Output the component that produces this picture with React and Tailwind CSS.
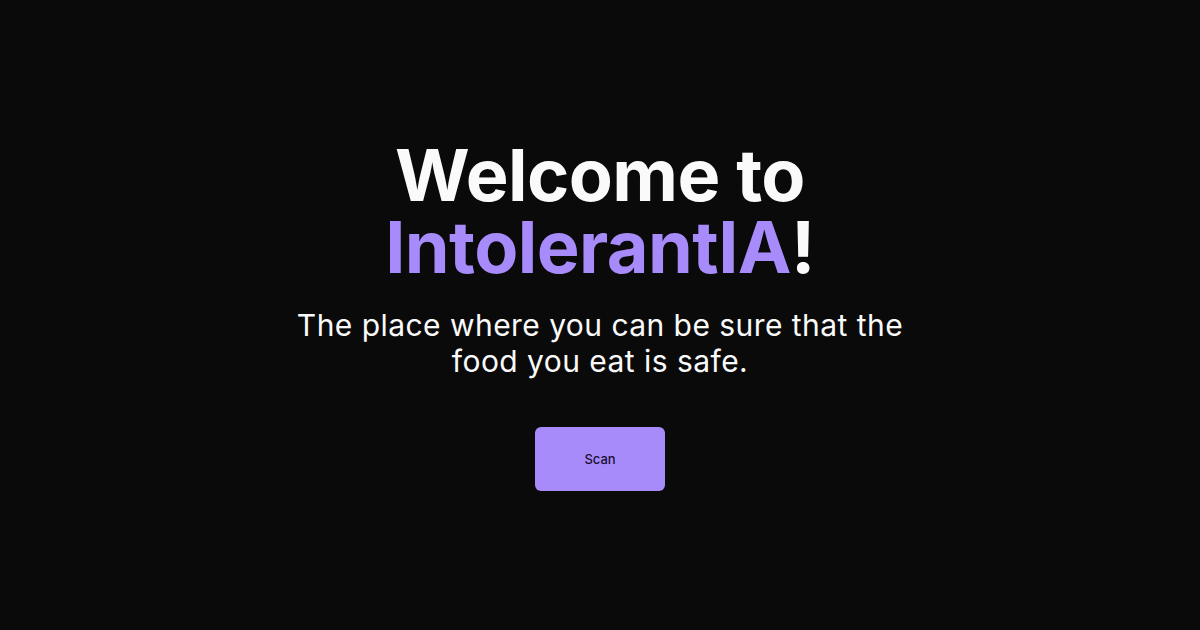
export default function App() {
  return (
    <div
      className="min-h-screen w-full bg-[#0a0a0a] flex flex-col items-center justify-center text-center"
      style={{ fontFamily: "Inter, 'Noto Sans', sans-serif" }}
    >
      <h1 className="text-[72px] leading-[72px] font-bold tracking-[-0.008em] text-[#fafafa]">
        <span className="block">Welcome to</span>
        <span className="block">
          <span className="text-[#a78bfa]">IntolerantIA</span>!
        </span>
      </h1>
      <p className="mt-6 text-[30px] leading-[36px] text-[#fafafa] tracking-[0.015em]">
        The place where you can be sure that the
        <br />
        food you eat is safe.
      </p>
      <button className="mt-12 w-[130px] h-[64px] rounded-md bg-[#a78bfa] text-[13px] font-medium text-[#1a1033] pt-[2px]">
        Scan
      </button>
    </div>
  );
}
